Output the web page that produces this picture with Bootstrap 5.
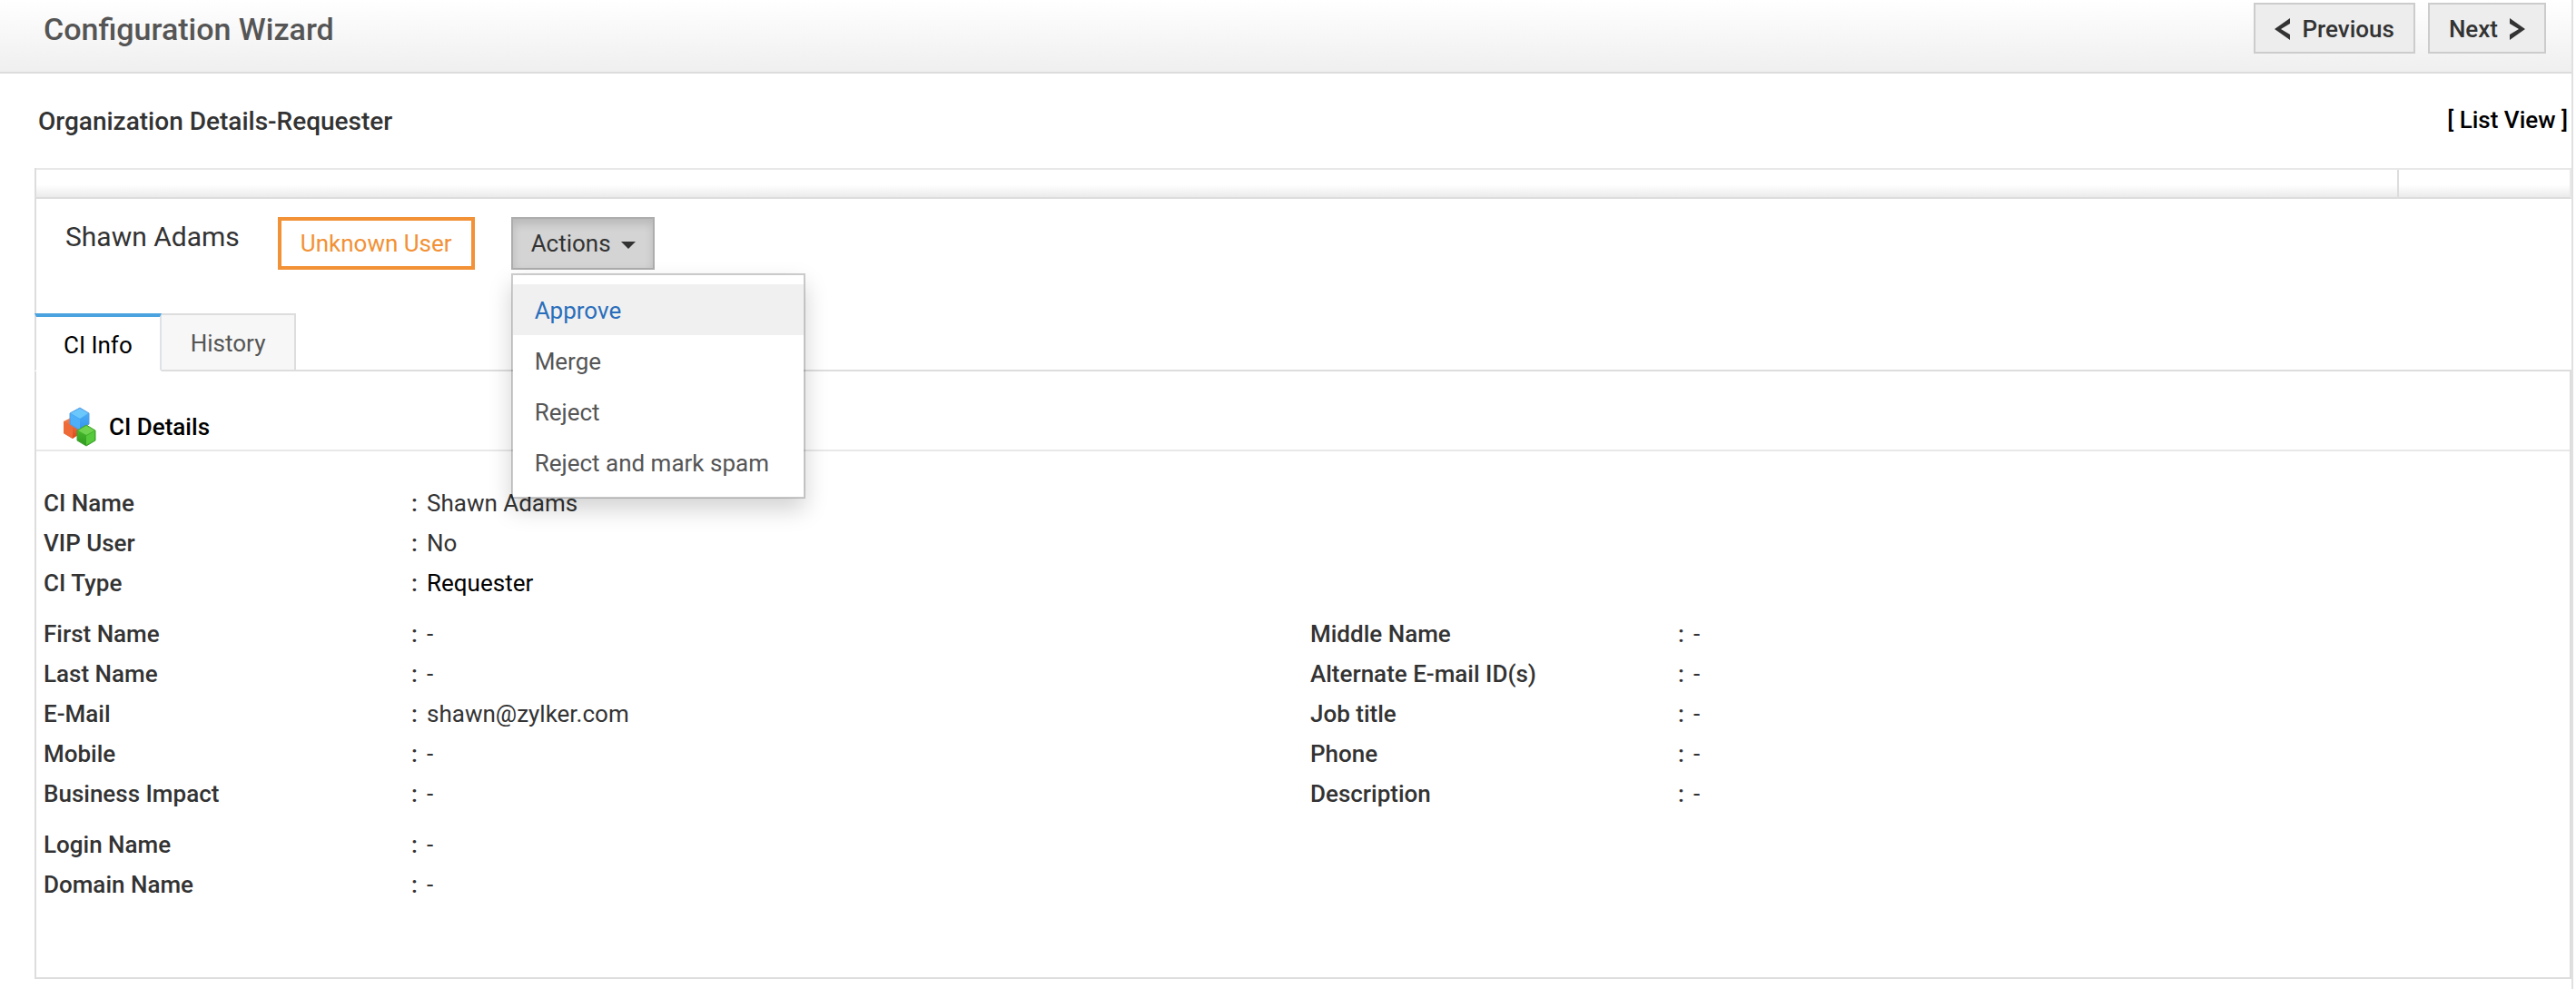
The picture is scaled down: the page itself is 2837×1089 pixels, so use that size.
<!DOCTYPE html>
<html lang="en">
<head>
<meta charset="utf-8">
<meta name="viewport" content="width=device-width, initial-scale=1">
<title>Configuration Wizard</title>
<link href="https://cdn.jsdelivr.net/npm/bootstrap@5.3.0/dist/css/bootstrap.min.css" rel="stylesheet">
<style>
  body { font-family: Roboto, "Liberation Sans", sans-serif; font-size: 26px; line-height: 36px; color: #333; background: #fff; }
  .page-frame { margin-right: 3px; border-right: 2px solid #e0e0e0; }
  .wizard-header { padding: 3px 28px 20px 48px; background: linear-gradient(#fff, #efefef); border-bottom: 2px solid #dcdcdc; }
  .wizard-title { font-size: 34px; line-height: 58px; height: 56px; font-weight: 500; color: #555; }
  .btn-wizard { --bs-btn-font-size: 26px; --bs-btn-line-height: 36px; --bs-btn-font-weight: 500; --bs-btn-color: #333; --bs-btn-bg: #ededed; --bs-btn-border-color: #ccc; --bs-btn-border-width: 2px; --bs-btn-border-radius: 0; --bs-btn-hover-bg: #e2e2e2; --bs-btn-hover-color: #333; --bs-btn-hover-border-color: #bbb; padding: 9px 21px 7px; height: 56px; gap: 12px; }
  .wizard-steps { gap: 14px; }
  .chevron { width: 18px; height: 24px; fill: #333; }
  .org-row { padding: 34px 4px 32px 42px; }
  .org-title { font-size: 28px; line-height: 38px; font-weight: 500; }
  .list-link { line-height: 34px; font-weight: 500; color: #000; text-decoration: none; }
  .detail-area { margin-left: 38px; border-left: 2px solid #ddd; }
  .strip { height: 34px; border: 2px solid #e8e8e8; border-left: 0; border-bottom-color: #ddd; background: linear-gradient(#fff 55%, #ebebeb); }
  .strip-end { width: 190px; border-left: 2px solid #ddd; }
  .user-row { padding: 20px 32px 48px 32px; }
  .user-name { font-size: 30px; line-height: 44px; margin-right: 42px; }
  .status-tag { border: 4px solid #f29135; color: #f29135; padding: 7px 21px; margin-right: 40px; }
  .btn-actions { --bs-btn-font-size: 26px; --bs-btn-line-height: 36px; --bs-btn-padding-x: 20px; --bs-btn-padding-y: 9px; --bs-btn-color: #333; --bs-btn-border-width: 2px; --bs-btn-border-radius: 0; --bs-btn-active-color: #333; --bs-btn-active-bg: #d4d4d4; --bs-btn-active-border-color: #adadad; width: 158px; text-align: left; }
  .btn-actions.show { box-shadow: inset 0 6px 10px rgba(0, 0, 0, .125); }
  .btn-actions::after { margin-left: 11px; vertical-align: 3px; border-top-width: 8px; border-left-width: 8px; border-right-width: 8px; }
  .actions-menu { --bs-dropdown-font-size: 26px; --bs-dropdown-min-width: 324px; --bs-dropdown-padding-y: 10px; --bs-dropdown-border-radius: 0; --bs-dropdown-border-width: 2px; --bs-dropdown-border-color: rgba(0, 0, 0, .2); --bs-dropdown-link-color: #555; --bs-dropdown-link-hover-color: #555; --bs-dropdown-link-hover-bg: #f0f0f0; --bs-dropdown-link-active-color: #2a6ebb; --bs-dropdown-link-active-bg: #f0f0f0; top: 100%; margin-top: 4px; box-shadow: 0 12px 24px rgba(0, 0, 0, .175); }
  .actions-menu .dropdown-item { padding: 11px 24px 9px; }
  .ci-tabs { --bs-nav-tabs-border-width: 2px; --bs-nav-tabs-border-color: #ddd; --bs-nav-tabs-border-radius: 0; margin-left: -2px; }
  .ci-tabs .nav-link { padding: 13px 32px; border: 2px solid #ddd; border-left-width: 0; background: #f7f7f7; color: #555; height: 64px; }
  .ci-tabs .nav-item:first-child .nav-link { padding: 13px 30px; border-left: 2px solid #ddd; border-top: 4px solid #4aa3df; border-bottom-color: #fff; background: #fff; color: #000; }
  .ci-panel { border-right: 2px solid #ddd; border-bottom: 2px solid #ddd; padding-bottom: 68px; }
  .ci-heading { padding: 38px 28px 2px 28px; border-bottom: 2px solid #e8e8e8; }
  .ci-title { font-size: 26px; line-height: 46px; font-weight: 500; color: #000; margin-left: 12px; }
  .cubes { width: 40px; height: 46px; }
  .field-list { padding-top: 35px; }
  .field-group { margin-bottom: 12px; }
  .field-line { padding: 4px 8px; }
  .field-line dt { width: 405px; font-weight: 500; }
  .field-line dd::before { content: ":"; display: inline-block; width: 17px; font-weight: 500; }
  .field-line a { color: #000; text-decoration: none; }
</style>
</head>
<body>
<div class="page-frame min-vh-100">
  <header class="wizard-header d-flex justify-content-between">
    <h1 class="wizard-title mb-0">Configuration Wizard</h1>
    <div class="wizard-steps d-flex">
      <button type="button" class="btn btn-wizard d-flex align-items-center"><svg class="chevron" viewBox="0 0 18 24" aria-hidden="true"><path d="M0 12 17 0V6L7 12 17 18V24Z"/></svg>Previous</button>
      <button type="button" class="btn btn-wizard d-flex align-items-center">Next<svg class="chevron" viewBox="0 0 18 24" aria-hidden="true"><path d="M18 12 1 0V6L11 12 1 18V24Z"/></svg></button>
    </div>
  </header>
  <div class="org-row d-flex justify-content-between">
    <h2 class="org-title mb-0">Organization Details-Requester</h2>
    <a class="list-link" href="#">[ List View ]</a>
  </div>
  <main class="detail-area">
    <div class="strip d-flex justify-content-end"><div class="strip-end"></div></div>
    <div class="user-row d-flex align-items-start">
      <h3 class="user-name fw-normal mb-0">Shawn Adams</h3>
      <span class="status-tag">Unknown User</span>
      <div class="dropdown">
        <button type="button" class="btn btn-actions dropdown-toggle show" data-bs-toggle="dropdown" aria-expanded="true">Actions</button>
        <ul class="dropdown-menu actions-menu show">
          <li><a class="dropdown-item active" href="#">Approve</a></li>
          <li><a class="dropdown-item" href="#">Merge</a></li>
          <li><a class="dropdown-item" href="#">Reject</a></li>
          <li><a class="dropdown-item" href="#">Reject and mark spam</a></li>
        </ul>
      </div>
    </div>
    <ul class="nav nav-tabs ci-tabs">
      <li class="nav-item"><a class="nav-link active" aria-current="page" href="#">CI Info</a></li>
      <li class="nav-item"><a class="nav-link" href="#">History</a></li>
    </ul>
    <section class="ci-panel">
      <div class="ci-heading d-flex">
        <svg class="cubes" viewBox="0 0 40 46" aria-hidden="true">
          <defs>
            <linearGradient id="orangeSide" x2="0" y2="1"><stop stop-color="#f48450"/><stop offset="1" stop-color="#d9481a"/></linearGradient>
            <linearGradient id="blueSide" x2="0" y2="1"><stop stop-color="#54b6f8"/><stop offset="1" stop-color="#3290ee"/></linearGradient>
            <linearGradient id="greenSide" x2="0" y2="1"><stop stop-color="#4dc233"/><stop offset="1" stop-color="#2f9a1d"/></linearGradient>
          </defs>
          <path d="M2 17 12 12 21 17V30L12 36 2 30Z" fill="url(#orangeSide)"/>
          <path d="M2 17 12 22V36L2 30Z" fill="#ee6b38"/>
          <path d="M9 8 20 2 30 8V20L20 27 9 20Z" fill="url(#blueSide)" stroke="#5a9fe6"/>
          <path d="M10 8 20 3 29 8 20 14Z" fill="#6cc8fb"/>
          <path d="M10 9 20 15V26L10 20Z" fill="#4fb0fa"/>
          <path d="M17 27 27 21 37 27V38L27 44 17 38Z" fill="url(#greenSide)" stroke="#45a035"/>
          <path d="M18 27 27 22 36 27 27 32Z" fill="#6fd350"/>
          <path d="M27 33 36 28V38L27 43Z" fill="#55ca3a"/>
        </svg>
        <h4 class="ci-title mb-0">CI Details</h4>
      </div>
      <div class="field-list">
        <dl class="field-group">
          <div class="field-line d-flex"><dt>CI Name</dt><dd class="mb-0">Shawn Adams</dd></div>
          <div class="field-line d-flex"><dt>VIP User</dt><dd class="mb-0">No</dd></div>
          <div class="field-line d-flex"><dt>CI Type</dt><dd class="mb-0"><a href="#">Requester</a></dd></div>
        </dl>
        <div class="row g-0">
          <dl class="col-6 field-group">
            <div class="field-line d-flex"><dt>First Name</dt><dd class="mb-0">-</dd></div>
            <div class="field-line d-flex"><dt>Last Name</dt><dd class="mb-0">-</dd></div>
            <div class="field-line d-flex"><dt>E-Mail</dt><dd class="mb-0">shawn@zylker.com</dd></div>
            <div class="field-line d-flex"><dt>Mobile</dt><dd class="mb-0">-</dd></div>
            <div class="field-line d-flex"><dt>Business Impact</dt><dd class="mb-0">-</dd></div>
          </dl>
          <dl class="col-6 field-group">
            <div class="field-line d-flex"><dt>Middle Name</dt><dd class="mb-0">-</dd></div>
            <div class="field-line d-flex"><dt>Alternate E-mail ID(s)</dt><dd class="mb-0">-</dd></div>
            <div class="field-line d-flex"><dt>Job title</dt><dd class="mb-0">-</dd></div>
            <div class="field-line d-flex"><dt>Phone</dt><dd class="mb-0">-</dd></div>
            <div class="field-line d-flex"><dt>Description</dt><dd class="mb-0">-</dd></div>
          </dl>
        </div>
        <dl class="field-group">
          <div class="field-line d-flex"><dt>Login Name</dt><dd class="mb-0">-</dd></div>
          <div class="field-line d-flex"><dt>Domain Name</dt><dd class="mb-0">-</dd></div>
        </dl>
      </div>
    </section>
  </main>
</div>
<script src="https://cdn.jsdelivr.net/npm/bootstrap@5.3.0/dist/js/bootstrap.bundle.min.js"></script>
</body>
</html>
